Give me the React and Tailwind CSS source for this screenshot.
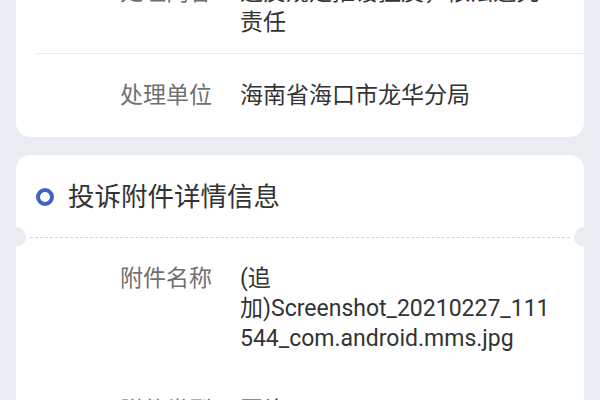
const FONT = { fontFamily: 'Roboto, "Noto Sans CJK SC", "Noto Sans", sans-serif' };

const Row = ({ label, lines, className = '' }) => (
  <div className={`flex text-[23px] leading-[30px] ${className}`}>
    <div className="w-[196px] shrink-0 text-right text-[#707070]">{label}</div>
    <div className="ml-[28px] whitespace-nowrap text-[#333333]">
      {lines.map((l) => (
        <div key={l}>{l}</div>
      ))}
    </div>
  </div>
);

export default function App() {
  return (
    <div style={FONT} className="w-[600px] h-[400px] overflow-hidden bg-[#e9ecf1] px-[16px]">
      {/* previous card, scrolled past */}
      <div className="-mt-[39px] rounded-b-[14px] bg-white">
        <Row label="处理内容" lines={['违反规定推诿扯皮，依法追究', '责任']} className="pt-[17px] pb-[15px]" />
        <div className="ml-[19px] h-px bg-[#ececec]" />
        <Row label="处理单位" lines={['海南省海口市龙华分局']} className="pt-[27px] pb-[26px]" />
      </div>

      {/* attachments */}
      <div className="mt-[18px] rounded-t-[14px] bg-white">
        <div className="flex h-[82px] items-center pl-[20px] pt-[1px]">
          <div className="h-[18px] w-[18px] rounded-full border-[4.5px] border-[#3d62c9]" />
          <span className="ml-[14px] text-[26.5px] text-[#333333]">投诉附件详情信息</span>
        </div>
        <div className="relative h-0">
          <div className="mx-[14px] border-t border-dashed border-[#d4d5d8]" />
          <div className="absolute -left-[10px] -top-[10px] h-[20px] w-[20px] rounded-full bg-[#e9ecf1]" />
          <div className="absolute -right-[10px] -top-[10px] h-[20px] w-[20px] rounded-full bg-[#e9ecf1]" />
        </div>
        <Row
          label="附件名称"
          lines={['(追', '加)Screenshot_20210227_111', '544_com.android.mms.jpg']}
          className="pt-[27px]"
        />
        <Row label="附件类型" lines={['图片']} className="pt-[42px]" />
      </div>
    </div>
  );
}
